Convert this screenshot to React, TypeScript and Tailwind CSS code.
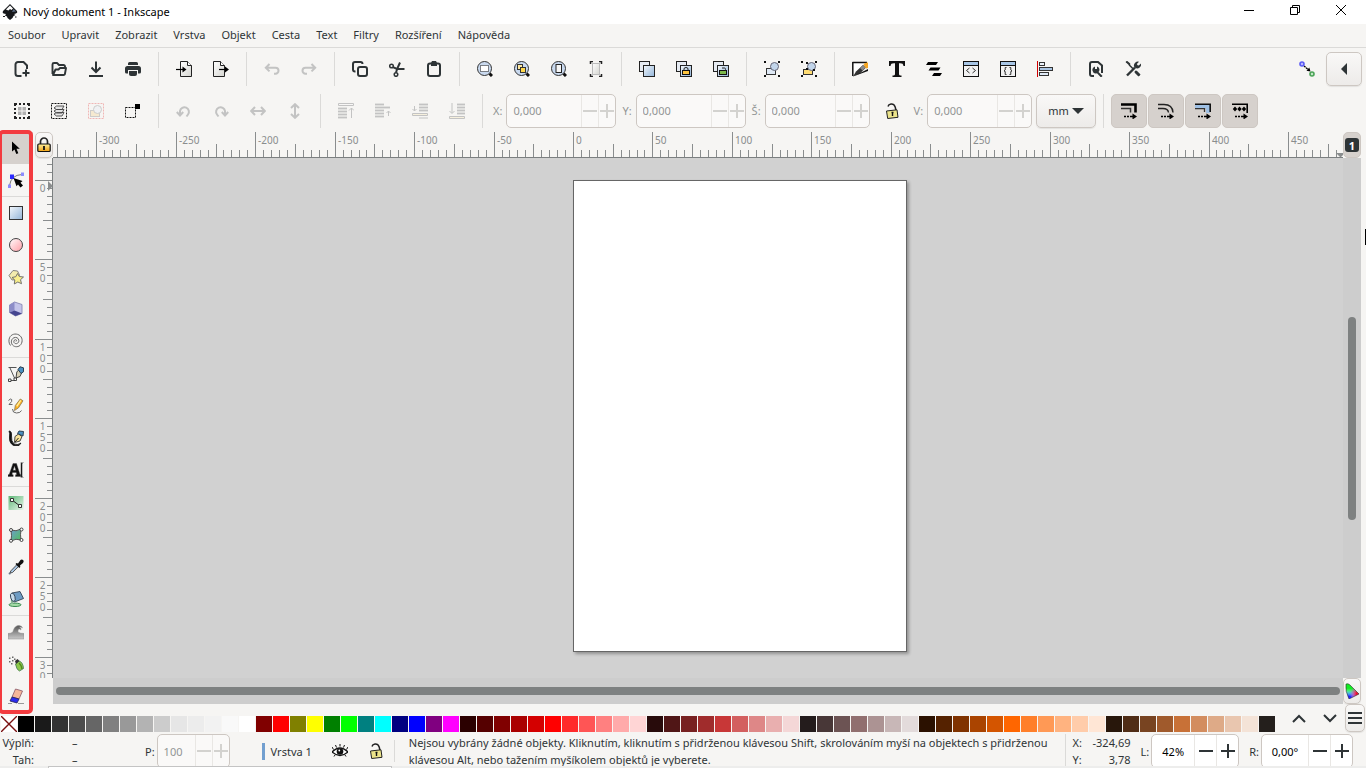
import { useEffect, useId, useRef, useState, type ReactNode } from "react";

const INK = "#2e3436";

function Icon({ children, faded = false }: { children: ReactNode; faded?: boolean }) {
  return (
    <svg
      viewBox="0 0 16 16"
      aria-hidden="true"
      fill="none"
      stroke="none"
      className={faded ? "size-4 shrink-0 opacity-25" : "size-4 shrink-0"}
    >
      {children}
    </svg>
  );
}

function Gradients() {
  return (
    <svg className="absolute size-0" aria-hidden="true">
      <defs>
        <linearGradient id="g-paper" x1="0" y1="0" x2="1" y2="1">
          <stop offset="0" stopColor="#ffffff" />
          <stop offset="1" stopColor="#d5d5d0" />
        </linearGradient>
        <linearGradient id="g-blue" x1="0" y1="0" x2="1" y2="1">
          <stop offset="0" stopColor="#f4f8fc" />
          <stop offset="1" stopColor="#92b4d8" />
        </linearGradient>
        <linearGradient id="g-pink" x1="0" y1="0" x2="1" y2="1">
          <stop offset="0" stopColor="#ffffff" />
          <stop offset="1" stopColor="#ff9ba4" />
        </linearGradient>
        <linearGradient id="g-gold" x1="0" y1="0" x2="0" y2="1">
          <stop offset="0" stopColor="#fff2a0" />
          <stop offset="1" stopColor="#f0a010" />
        </linearGradient>
        <linearGradient id="g-green" x1="0" y1="0" x2="1" y2="1">
          <stop offset="0" stopColor="#5fb878" />
          <stop offset="1" stopColor="#e8f6ea" />
        </linearGradient>
        <linearGradient id="g-teal" x1="0" y1="0" x2="1" y2="1">
          <stop offset="0" stopColor="#6f9bd0" />
          <stop offset="1" stopColor="#4fc05a" />
        </linearGradient>
        <linearGradient id="g-ink" x1="0" y1="0" x2="1" y2="1">
          <stop offset="0" stopColor="#ffffff" />
          <stop offset="0.5" stopColor="#e4e4e4" />
          <stop offset="0.8" stopColor="#111111" />
        </linearGradient>
        <linearGradient id="g-grey" x1="0" y1="0" x2="0" y2="1">
          <stop offset="0" stopColor="#555555" />
          <stop offset="1" stopColor="#c9c9c9" />
        </linearGradient>
      </defs>
    </svg>
  );
}

const arrowUndo = <path d="M5.500 3 1.800 6.700l3.700 3.700M2 6.700h9.500a3 3 0 0 1 0 6H10" stroke={INK} strokeWidth="2" />;

const pageShape = (
  <>
    <path d="M4.500.5h7l4 4v11h-11z" fill="url(#g-paper)" stroke="#222" />
    <path d="M11.500.5v4h4" fill="#fff" stroke="#222" />
  </>
);

const magnifier = (
  <>
    <path d="m12.500 12.500 2.500 2.500" stroke="#111" strokeWidth="3" />
    <circle cx="7.500" cy="7.500" r="7" fill="#c9d9ee" stroke="#333" />
  </>
);

const cloneBase = (
  <>
    <rect x=".5" y=".5" width="10" height="10" fill="#e6ebf2" stroke="#222" />
    <rect x="4.500" y="4.500" width="11" height="11" fill="url(#g-blue)" stroke="#222" />
  </>
);

const cornerDots = (
  <path d="M0 0h2v2H0zM14 0h2v2h-2zM0 14h2v2H0zM14 14h2v2h-2z" fill="#111" />
);

const codeWindow = (
  <>
    <rect x=".5" y=".5" width="15" height="15" fill="#f2f2f2" stroke="#111" />
    <path d="M1 1h14v3H1z" fill="#a8c6e6" />
    <path d="M1 4.500h14" stroke="#111" />
  </>
);

const openLock = (
  <>
    <path d="M12 7.500 11.200 4Q10 .8 7 1.100 4.500 1.500 4 3.500" stroke="#222" strokeWidth="1.500" />
    <path d="m2.500 8 10.500-1.200 1 7.500-10.300 1.200z" fill="#ece48a" stroke="#222" strokeLinejoin="round" />
    <path d="M7.500 9.500h2M8.500 10v3" stroke="#111" strokeWidth="1.400" />
  </>
);

const dashArrow = (
  <>
    <path d="M3 13.500h2m1 0h2m1 0h3" stroke="#000" strokeWidth="1.400" />
    <path d="m11.500 10.500 4.500 3-4.500 3z" fill="#000" />
  </>
);

type Tool = { label: string; art: ReactNode; off?: boolean };

const commandGroups: Tool[][] = [
  [
    { label: "Nový", art: <path d="M7.500 15H4a2.500 2.500 0 0 1-2.500-2.500v-9A2.500 2.500 0 0 1 4 1h5.500L13 4.500V8M12 8.500v7M8.500 12h7" stroke={INK} strokeWidth="2" /> },
    { label: "Otevřít", art: <path d="M1.500 13V3.500a1.500 1.500 0 0 1 1.500-1.500h3L8 4h4.500A1.500 1.500 0 0 1 14 5.500V7M2 14l2.500-5.500h3L9 7h6l-1 5.500A1.500 1.500 0 0 1 12.500 14z" stroke={INK} strokeWidth="1.900" strokeLinejoin="round" /> },
    { label: "Uložit", art: <path d="M8 .5v10M3.500 6.500 8 11l4.500-4.500M1 15h14" stroke={INK} strokeWidth="2" /> },
    { label: "Tisk", art: <><path d="M4.500 1h7a1.500 1.500 0 0 1 1.500 1.500V4H3V2.500A1.500 1.500 0 0 1 4.500 1z" fill={INK} /><path d="M2.500 5h11A2.500 2.500 0 0 1 16 7.500V11a1.500 1.500 0 0 1-1.500 1.500H13V9H3v3.500H1.500A1.500 1.500 0 0 1 0 11V7.500A2.500 2.500 0 0 1 2.500 5z" fill={INK} /><path d="M4 10h8v3a2 2 0 0 1-2 2H6a2 2 0 0 1-2-2z" fill={INK} /></> },
  ],
  [
    { label: "Importovat", art: <>{pageShape}<path d="M0 8.500h7" stroke="#000" strokeWidth="1.200" /><path d="m6.500 5.500 4 3-4 3z" fill="#000" /></> },
    { label: "Exportovat", art: <><g transform="translate(-4 0)">{pageShape}</g><path d="M6 8.500h7" stroke="#000" strokeWidth="1.200" /><path d="m12 5.500 4 3-4 3z" fill="#000" /></> },
  ],
  [
    { label: "Zpět", art: arrowUndo, off: true },
    { label: "Znovu", art: <g transform="matrix(-1 0 0 1 16 0)">{arrowUndo}</g>, off: true },
  ],
  [
    { label: "Kopírovat", art: <><path d="M3.500 10.500H3A2 2 0 0 1 1 8.500V3a2 2 0 0 1 2-2h5.500a2 2 0 0 1 2 2" stroke={INK} strokeWidth="2" /><rect x="6" y="6" width="9" height="9" rx="2" stroke={INK} strokeWidth="2" /></> },
    { label: "Vyjmout", art: <><circle cx="2.500" cy="5" r="1.800" stroke={INK} strokeWidth="1.500" /><circle cx="7" cy="13.500" r="1.800" stroke={INK} strokeWidth="1.500" /><path d="M4 6.200 8 8h7.500M7 11.500 8.500 7 11 1.500" stroke={INK} strokeWidth="2" /></> },
    { label: "Vložit", art: <><rect x="2" y="2.500" width="12" height="12.500" rx="2" stroke={INK} strokeWidth="2" /><path d="M6 0h4l1 2v3H5V2z" fill={INK} /></> },
  ],
  [
    { label: "Přiblížit výběr", art: <>{magnifier}<rect x="3.500" y="4.500" width="8" height="6" fill="#fff" stroke="#111" strokeDasharray="1 1" /></> },
    { label: "Přiblížit kresbu", art: <>{magnifier}<rect x="3.500" y="3.500" width="5" height="5" fill="#ffe9a0" stroke="#333" /><rect x="6.500" y="6.500" width="5" height="5" fill="#ffd84a" stroke="#333" /></> },
    { label: "Přiblížit stránku", art: <>{magnifier}<rect x="5" y="3.500" width="5.500" height="8" fill="#f6f6f6" stroke="#222" /></> },
    { label: "Střed stránky", art: <><rect x="4.500" y="2.500" width="7" height="11" fill="url(#g-paper)" stroke="#bbb" /><path d="M2.500 3V.5H5M11 .5h2.500V3M2.500 13v2.500H5M11 15.500h2.500V13" stroke="#222" strokeWidth="1.500" /></> },
  ],
  [
    { label: "Duplikovat", art: cloneBase },
    { label: "Vytvořit klon", art: <>{cloneBase}<rect x="6.500" y="9.500" width="7" height="4" fill="#ffc640" stroke="#111" /><path d="M8 9.500V8q0-1.500 2-1.500T12 8v1.500" stroke="#222" /></> },
    { label: "Odpojit klon", art: <>{cloneBase}<rect x="6.500" y="9.500" width="7" height="4" fill="#7db84a" stroke="#111" /><path d="M9 7h2.500q1 0 1 1.500v1" stroke="#222" /></> },
  ],
  [
    { label: "Seskupit", art: <>{cornerDots}<rect x="2.500" y="7.500" width="9" height="6" fill="#dfe9f5" stroke="#333" /><circle cx="10.500" cy="5.500" r="4" fill="#c2d5ea" stroke="#667" /></> },
    { label: "Zrušit seskupení", art: <>{cornerDots}<rect x="2.500" y="8.500" width="9" height="5" fill="#ffdc73" stroke="#333" /><circle cx="10.500" cy="5.500" r="4" fill="#c2d5ea" stroke="#667" /><path d="M5 7h2v2H5zM12 8h2v2h-2zM5 1h2v2H5z" fill="#111" /></> },
  ],
  [
    { label: "Výplň a obrys", art: <><path d="M.5 1h14L.8 15.500z" fill="#fff" /><path d="M.5 1.500H15M.8 1v14" stroke="#111" strokeWidth="1.500" /><path d="m1 15.500 3-5L11 4l3 2.500-6 6z" fill="#333" /><path d="m8 7 3-3 2.500 2.500-3 3z" fill="#888" /><path d="M11.500 3.500 13 2l3-.5V7l-2 .5z" fill="#f5a623" /><path d="M1 15.500 16 10v-2l-6 3z" fill="#111" /></> },
    { label: "Text a písmo", art: <path d="M0 0h16v5h-1.500c-.3-2-1-2.700-3.500-2.700H10V13c0 1.200.8 1.500 2.500 1.500V16h-9v-1.500C5.200 14.500 6 14.200 6 13V2.300H5C2.500 2.300 1.800 3 1.500 5H0z" fill="#111" /> },
    { label: "Vrstvy", art: <path d="M2 1h10l-2 3H0zM4.500 6.500h10l-2 3h-10zM8 12h8l-2 3H6z" fill="#000" /> },
    { label: "Editor XML", art: <>{codeWindow}<path d="M6.500 7 3.500 9.500l3 2.500M9.500 7l3 2.500-3 2.500" stroke="#333" /></> },
    { label: "Selektory", art: <>{codeWindow}<path d="M6.500 6.500H5.200v2.500L4 10l1.200.5v3h1.300M9.500 6.500h1.300v2.500l1.200 1-1.200.5v3H9.500" stroke="#333" /></> },
    { label: "Zarovnat a rozmístit", art: <><path d="M.5 0v16" stroke="#d00000" /><rect x="2.500" y="1.500" width="5" height="3" fill="#eaf1f9" stroke="#333" /><rect x="2.500" y="6.500" width="13" height="3" fill="#a9c4e2" stroke="#333" /><rect x="2.500" y="11.500" width="9" height="3" fill="#dfe9f5" stroke="#333" /></> },
  ],
  [
    { label: "Vlastnosti dokumentu", art: <><path d="M6 15H4a2 2 0 0 1-2-2V3a2 2 0 0 1 2-2h6l4 3.500V12" stroke={INK} strokeWidth="2" /><path d="M7 5.500V8h2V5.500a3.300 3.300 0 0 1 1.500 5.500l4 4-1.500 1.500L9 12.300a3.500 3.500 0 0 1-2-6.800z" fill={INK} /></> },
    { label: "Předvolby", art: <><path d="m2 14.500 8-8" stroke={INK} strokeWidth="2.400" /><path d="M14 .8 11.800 3l.8 1.200 1.200.4L16 2.400A4 4 0 0 1 10.500 7L9 5.500A4 4 0 0 1 14 .8z" fill={INK} /><path d="M1 1.500 2 .7 4.500 2.800v1.500l3.500 3.500M10 10l4.500 4.500" stroke={INK} strokeWidth="1.500" fill={INK} /><path d="m10.500 10.500 4 4" stroke={INK} strokeWidth="3" /></> },
  ],
];

const rotateCcw = <path d="M4 13V8a4.500 4.500 0 1 1 8 3.500l-1.500 2M.8 9 4 12.500 7.200 9" stroke={INK} strokeWidth="2" />;
const bars = (w: number[]) => w.map((n, i) => <path key={i} d={`M0 ${1.5 + i * 3}h${n}`} stroke={INK} strokeWidth="1.800" />);

const selectGroups: Tool[][] = [
  [
    { label: "Vybrat vše", art: <><path d="M0 0h3v2H2v1H0zM5 0h2v2H5zM9 0h2v2H9zM13 0h3v3h-2V2h-1zM0 5h2v2H0zM0 9h2v2H0zM14 5h2v2h-2zM14 9h2v2h-2zM0 13h2v1h1v2H0zM5 14h2v2H5zM9 14h2v2H9zM13 14h1v-1h2v3h-3z" fill="#222" /><path d="M4 4h3.500v3.500H4zM8.500 4H12v3.500H8.500zM4 8.500h3.500V12H4zM8.500 8.500H12V12H8.500z" fill="#b0b0b0" /></> },
    { label: "Vybrat vše ve všech vrstvách", art: <><rect x=".5" y=".5" width="15" height="15" stroke="#111" strokeDasharray="2 1" /><path d="m3 11 2.500-1.500H13l-2 3.500H5.500zM3 8l2.500-1.500H13L11 10H5.500zM3 5l2.500-2H13l-2 3.500H5.500z" fill="#e4e4e4" stroke="#444" strokeWidth=".9" /></> },
    { label: "Zrušit výběr", off: true, art: <><rect x=".5" y=".5" width="15" height="15" stroke="#e00000" strokeDasharray="2 1" /><rect x="2.500" y="7.500" width="9" height="6" fill="#f3c66a" stroke="#555" /><circle cx="9.500" cy="6.500" r="4" fill="#dfe9f5" stroke="#555" /></> },
    { label: "Dotykový výběr", art: <><rect x=".5" y="4.500" width="10" height="10" stroke="#111" strokeDasharray="2 1" /><path d="M10 1h5v5h-5z" fill="#000" /></> },
  ],
  [
    { label: "Otočit vlevo", art: rotateCcw, off: true },
    { label: "Otočit vpravo", art: <g transform="matrix(-1 0 0 1 16 0)">{rotateCcw}</g>, off: true },
    { label: "Překlopit vodorovně", art: <path d="M1.500 8h13M5 4 1.200 8 5 12M11 4l3.800 4L11 12" stroke={INK} strokeWidth="2" />, off: true },
    { label: "Překlopit svisle", art: <path d="M8 1.500v13M4 5l4-3.800L12 5M4 11l4 3.800L12 11" stroke={INK} strokeWidth="2" />, off: true },
  ],
  [
    { label: "Do popředí", art: <><path d="M.5.500h15v2H.5z" fill="#fff" stroke={INK} />{[5, 8, 11, 14].map((y) => <path key={y} d={`M0 ${y + 0.5}h9`} stroke={INK} strokeWidth="1.800" />)}<path d="M13.500 15V5M11 7.500 13.500 5 16 7.500" stroke={INK} /></>, off: true },
    { label: "Zvýšit", art: <>{bars([9, 15, 9, 9, 9])}<path d="M13.500 13V8M11.500 10l2-2 2 2" stroke={INK} /></>, off: true },
    { label: "Snížit", art: <><g transform="matrix(-1 0 0 1 16 0)">{bars([9, 9, 9])}</g><path d="M.5 10.500h15v2H.5z" fill="#f6e2a0" stroke={INK} /><path d="M7 15h9M2.500 3v5M.5 6l2 2 2-2" stroke={INK} /></>, off: true },
    { label: "Do pozadí", art: <><g transform="matrix(-1 0 0 1 16 0)">{bars([8, 8, 8, 8])}</g><path d="M.5 13.500h15v2H.5z" fill="#f6e2a0" stroke={INK} /><path d="M3 0v10M.5 8 3 10.500 5.500 8" stroke={INK} /></>, off: true },
  ],
];

const affectTools: Tool[] = [
  { label: "Měnit tloušťku obrysu", art: <><path d="M0 1.500h14.500v8" stroke="#000" strokeWidth="2.600" /><path d="M0 5.500h9.500v4" stroke="#333" strokeWidth="1.500" />{dashArrow}</> },
  { label: "Měnit zaoblené rohy", art: <><path d="M0 1.500h6q8.500 0 9 8M0 5.500h5q5 0 5.500 4" stroke="#222" strokeWidth="1.400" />{dashArrow}</> },
  { label: "Posouvat přechody", art: <><path d="M0 1h15v9h-4V5.500H0z" fill="#9fc0e4" /><path d="M0 1.200h15.200V9" stroke="#111" strokeWidth="1.600" /><path d="M0 5.700h9.500V9" stroke="#333" strokeWidth="1.300" />{dashArrow}</> },
  { label: "Posouvat vzorky", art: <><path d="M0 1.200h15.200V10" stroke="#000" strokeWidth="1.600" /><path d="m3 3.500 2.200 2.500L3 8.500.8 6zM7.500 3.500 9.700 6 7.500 8.500 5.300 6zM12 3.500 14.200 6 12 8.500 9.800 6z" fill="#000" />{dashArrow}</> },
];

const toolboxGroups: Tool[][] = [
  [
    { label: "Výběr", art: <path d="M4 1.500v10l2.500-2 1.800 4.500 2-.8L8.500 8.800h3.300z" fill="#000" /> },
    { label: "Uzly", art: <><path d="M1.500 13.500Q3 3 14 2.500" stroke="#777" /><path d="M0 12.500h3V16H0zM13 .5h3V4h-3z" fill="#8c8cff" /><path d="M2 2.500h4V7H2z" fill="#2b2bff" /><path d="m5.500 6 9 3-2 1.700 2.500 2.800-2.500 2-2.500-3-1.500 1.800z" fill="#000" /></> },
  ],
  [
    { label: "Obdélník", art: <rect x="1.500" y="1.500" width="13" height="13" fill="url(#g-blue)" stroke="#333" /> },
    { label: "Elipsa", art: <circle cx="8" cy="8" r="6.500" fill="url(#g-pink)" stroke="#444" /> },
    { label: "Hvězda", art: <><path d="m5 1.500 4.500.5 2 4-2.500 4.500-5 .5-3-4.500z" fill="#f3ecae" stroke="#777" strokeWidth=".9" /><path d="m9.500 4.500 1.800 3 4.200.5-3 2.700 1 4-3.700-1.700-3.500 2 .5-4-2.800-2.500 3.800-.8z" fill="#f9ef8c" stroke="#666" strokeWidth=".9" /></> },
    { label: "Kvádr", art: <><path d="M6.500 1 14 3.500v9L7.500 15 1.500 11.500V4z" fill="#c4c4ea" stroke="#8888b4" strokeWidth=".9" /><path d="M6.500 1v8.500l-5 2V4z" fill="#8c8cc8" /><path d="m1.500 11.500 5-2 7.500 3L7.500 15z" fill="#45458f" /></> },
    { label: "Spirála", art: <path d="M8 8.500c1-1 .5-2-.7-1.800C5.500 7 5.300 9.500 6.800 10.300c2.200 1.200 4.300-.8 4-3C10.500 4.800 8 3.800 5.800 4.800 3 6.200 2.700 9.800 4.500 12c2.300 2.500 6.300 2.200 8.300-.4C15 8.500 14.500 4 11 2 7.500 0 3 1.200 1.500 4.800c-1 2.500-.7 5.700 1 7.700" stroke="#666" /> },
  ],
  [
    { label: "Pero", art: <><path d="M.5 1.500h8M2 2l4.500 10M2 14.500h5" stroke="#555" /><path d="M.5 13h2.500v2.500H.5zM6 12h2.500v2.500H6z" fill="#fff" stroke="#333" strokeWidth=".9" /><path d="m8 12 .8-6L11 3.500l3 2.500-2 4.500z" fill="#d9d2b8" stroke="#333" strokeWidth=".9" /><path d="m10 3.500 2-2.700 3.500 1v4L13 7.500z" fill="#4a90c0" stroke="#234" strokeWidth=".9" /></> },
    { label: "Tužka", art: <><path d="M.5 2.500q2-2.500 3.200-1T1 6.500h3.500M4.500 11q0 4 4 4t5-2.500" stroke="#666" /><path d="m6.500 12.500.8-5 5-6.500 2.700 1.800-4.500 7z" fill="#ffb21e" stroke="#875" strokeWidth=".8" /><path d="m8.200 8 4-6L13.300 2.700l-4 6z" fill="#fff0a0" /></> },
    { label: "Kaligrafie", art: <><path d="M1 1q3 0 2.500 5T6 14q4 1.500 7-1l-2 2.500H5.500Q1 13 1.500 7 2 3 1 1z" fill="#111" stroke="#111" strokeWidth=".8" /><path d="M6.500 12.500 7 6.500l3.500-2.500 3.500 2.500L12 11z" fill="#f9e49a" stroke="#333" strokeWidth=".9" /><path d="m9.500 3.500 1.500-2.500 4.500.5-.5 4.500z" fill="#4a90c0" stroke="#234" strokeWidth=".9" /><path d="m7 12 3.500-4" stroke="#222" /></> },
    { label: "Text", art: <path d="M0 14.500v-1.700l1.200-.3L5 1.500h3.500l3.500 11 1 .3v1.700H7.500v-1.700l1.200-.3-.5-2H4.500l-.6 2 1.300.3v1.700zM5 8.300h2.800L6.500 4zM12.800.5q1.300 0 1.300 1.300v12.500q0 1.200-1.300 1.200M15.500.5Q14.100.5 14.100 1.800M14.100 14.300q0 1.200 1.400 1.200" fill="#111" stroke="#444" strokeWidth=".4" fillRule="evenodd" /> },
  ],
  [
    { label: "Přechod", art: <><rect x=".5" y="1" width="15" height="14" fill="url(#g-green)" /><path d="m4 5 8 6" stroke="#222" /><path d="M2.500 3.500h3v3h-3zM10.500 9.500h3v3h-3z" fill="#fff" stroke="#333" /></> },
    { label: "Síť", art: <><path d="M3 3q5 2 10-1-1 6 0 11-5-2-10 1 1-5 0-11z" fill="url(#g-teal)" stroke="#555" /><g fill="#fff" stroke="#333" strokeWidth=".9"><circle cx="3" cy="3" r="1.500" /><circle cx="13.500" cy="2.500" r="1.500" /><circle cx="13.500" cy="13" r="1.500" /><circle cx="3" cy="13.800" r="1.500" /></g></> },
    { label: "Kapátko", art: <><path d="m2 14 .7-2L9 5.500l1.800 1.800L4.500 13.500z" fill="#a8c4e0" stroke="#444" strokeWidth=".9" /><path d="m7.500 5 1-1 1.500.5L12.500 1Q14 0 15.500 1.500q.5 1-.5 2.500l-3 2.500.3 1.500-1 1z" fill="#111" /><circle cx="1.700" cy="14.500" r="1.100" fill="#678" /></> },
    { label: "Vyplnění", art: <><ellipse cx="7" cy="13.800" rx="6" ry="1.700" fill="#a5dca6" stroke="#3a8a50" /><path d="M4 5v8" stroke="#8ab896" strokeWidth="2.200" /><path d="m4 2 8-1.500L15.500 7.500 6.500 11z" fill="#6d9cc4" stroke="#345" strokeWidth=".9" /><ellipse cx="4.800" cy="6.200" rx="2.200" ry="4.300" fill="#c7dbea" stroke="#345" strokeWidth=".9" transform="rotate(-15 5 6)" /></> },
  ],
  [
    { label: "Vylepšit", art: <path d="M0 15V9.500q5 0 5.500-3.500Q7 1.500 11 1.500q3 .3 3.500 2.500-1.500-1.500-3-.8 2 .8 1.500 2.800-1.500-1.800-3 0-1 3.500 6 3.500V15z" fill="url(#g-grey)" stroke="#888" strokeWidth=".5" /> },
    { label: "Sprej", art: <><path d="M1 1.500h1.500V3H1zM4 .5h1.500V2H4zM1 5h1.500v1.500H1zM4 4h1.500v1.500H4zM6 2.500h1.500V4H6zM3 7h1.500v1.500H3z" fill="#666" /><path d="m7.500 8 3.500-3q4 1 4.500 7.500L11.500 15q-3-1-4-7z" fill="#8cc84a" stroke="#475" strokeWidth=".8" /><path d="m7 5 2.500-2 2 2L8 8z" fill="#333" /><path d="M11 7q2.500 2 3 6" stroke="#4f8a1c" strokeWidth="1.500" /></> },
    { label: "Guma", art: <><path d="M0 15.500h4M10 15.500h6" stroke="#999" /><path d="m7.500 1 7 2-3.500 8-7-2z" fill="#f5b79a" stroke="#856" strokeWidth=".8" /><path d="m4 9 7 2-2 4-7-2z" fill="#2b2bf0" stroke="#225" strokeWidth=".8" /></> },
  ],
];

function Divider() {
  return <span aria-hidden="true" className="mx-[7px] h-[34px] w-px bg-[#dbdad8]" />;
}

function ToolButton({ tool }: { tool: Tool }) {
  return (
    <button type="button" aria-label={tool.label} disabled={tool.off} className="flex h-[34px] w-9 items-center justify-center rounded-md">
      <Icon faded={tool.off}>{tool.art}</Icon>
    </button>
  );
}

function Group({ tools }: { tools: Tool[] }) {
  return (
    <div className="flex gap-px">
      {tools.map((t) => (
        <ToolButton key={t.label} tool={t} />
      ))}
    </div>
  );
}

type SpinProps = { label: string; name: string; value: string; field: string; step: string; off?: boolean; status?: boolean };

function Spin({ label, name, value, field, step, off = false, status = false }: SpinProps) {
  const id = useId();
  const tone = off ? "text-[#929595]" : "text-[#2e3436]";
  const mark = off ? "#d3d2cf" : INK;
  return (
    <div className={`flex items-center ${tone}`}>
      <label htmlFor={id} className={status ? "mr-0.5 whitespace-nowrap text-[#2e3436]" : "mr-1 whitespace-nowrap"}>{label}</label>
      <div className={`flex h-[34px] overflow-hidden rounded-[5px] border border-[#cdc7c2] ${off ? "bg-[#faf9f8]" : "bg-white"}`}>
        <input id={id} aria-label={name} defaultValue={value} disabled={off} className={`${field} bg-transparent outline-none ${status && !off ? "text-center text-black" : "pl-1.5"}`} />
        <button type="button" aria-label={`${name} −`} disabled={off} className={`flex ${step} items-center justify-center border-l border-[#e9e7e4]`}>
          <svg viewBox="0 0 14 14" className="size-3.5 shrink-0"><path d="M0 7h14" stroke={mark} strokeWidth="2" /></svg>
        </button>
        <button type="button" aria-label={`${name} +`} disabled={off} className={`flex ${step} items-center justify-center border-l border-[#e9e7e4]`}>
          <svg viewBox="0 0 14 14" className="size-3.5 shrink-0"><path d="M0 7h14M7 0v14" stroke={mark} strokeWidth="2" /></svg>
        </button>
      </div>
    </div>
  );
}

const UNIT = 1.5888;

// Tick values, five units apart, that fall inside a ruler of the given length.
function ticksFor(origin: number, length: number) {
  const first = Math.ceil(-origin / UNIT / 5);
  const last = Math.floor((length - origin - 1) / UNIT / 5);
  return Array.from({ length: Math.max(0, last - first + 1) }, (_, i) => (first + i) * 5);
}

function useLength(axis: "width" | "height") {
  const ref = useRef<SVGSVGElement>(null);
  const [length, setLength] = useState(0);
  useEffect(() => {
    const el = ref.current;
    if (!el) return;
    const measure = () => setLength(el.getBoundingClientRect()[axis]);
    measure();
    const observer = new ResizeObserver(measure);
    observer.observe(el);
    return () => observer.disconnect();
  }, [axis]);
  return [ref, length] as const;
}

function HorizontalRuler() {
  const [ref, length] = useLength("width");
  return (
    <svg ref={ref} className="h-[26px] min-w-0 flex-1 overflow-hidden" aria-hidden="true" fill="#8a8d8e" fontSize="10">
      {ticksFor(520, length).map((u) => {
        const x = Math.round(520 + u * UNIT);
        const top = u % 50 === 0 ? 0 : u % 25 === 0 ? 12 : 18;
        return (
          <g key={u}>
            <rect x={x} y={top} width="1" height={26 - top} />
            {u % 50 === 0 && <text x={x + 3} y="12">{u}</text>}
          </g>
        );
      })}
      <rect x="0" y="25" width="100%" height="1" fill="#7b7f80" />
      <path d="M1283 21h9l-4.500 4.500z" />
    </svg>
  );
}

function VerticalRuler() {
  const [ref, length] = useLength("height");
  return (
    <svg ref={ref} className="h-full w-[18px] shrink-0 overflow-hidden" aria-hidden="true" fill="#8a8d8e" fontSize="10">
      {ticksFor(22, length).map((u) => {
        const y = Math.round(22 + u * UNIT);
        const left = u % 50 === 0 ? 0 : u % 25 === 0 ? 8 : 12;
        return (
          <g key={u}>
            <rect x={left} y={y} width={18 - left} height="1" />
            {u % 50 === 0 &&
              String(u).split("").map((d, i) =>
                y + 4 + i * 11 < length ? (
                  <text key={i} x="7.500" y={y + 12 + i * 11} textAnchor="middle">{d}</text>
                ) : null,
              )}
          </g>
        );
      })}
      <rect x="17" y="0" width="1" height="100%" fill="#7b7f80" />
      <path d="M13 23v10l5-5z" />
    </svg>
  );
}

const swatches = [
  "bg-[#000000]", "bg-[#1a1a1a]", "bg-[#333333]", "bg-[#4d4d4d]", "bg-[#666666]", "bg-[#808080]", "bg-[#999999]", "bg-[#b3b3b3]", "bg-[#cccccc]", "bg-[#e6e6e6]", "bg-[#ececec]", "bg-[#f2f2f2]", "bg-[#f9f9f9]", "bg-[#ffffff]",
  "bg-[#800000]", "bg-[#ff0000]", "bg-[#808000]", "bg-[#ffff00]", "bg-[#008000]", "bg-[#00ff00]", "bg-[#008080]", "bg-[#00ffff]", "bg-[#000080]", "bg-[#0000ff]", "bg-[#800080]", "bg-[#ff00ff]",
  "bg-[#2b0000]", "bg-[#550000]", "bg-[#800000]", "bg-[#aa0000]", "bg-[#d40000]", "bg-[#ff0000]", "bg-[#ff2a2a]", "bg-[#ff5555]", "bg-[#ff8080]", "bg-[#ffaaaa]", "bg-[#ffd5d5]",
  "bg-[#280b0b]", "bg-[#501616]", "bg-[#782121]", "bg-[#a02c2c]", "bg-[#c83737]", "bg-[#d35f5f]", "bg-[#de8787]", "bg-[#e9afaf]", "bg-[#f4d7d7]",
  "bg-[#241c1c]", "bg-[#483737]", "bg-[#6c5353]", "bg-[#916f6f]", "bg-[#ac9393]", "bg-[#c8b7b7]", "bg-[#e3dbdb]",
  "bg-[#2b1100]", "bg-[#552200]", "bg-[#803300]", "bg-[#aa4400]", "bg-[#d45500]", "bg-[#ff6600]", "bg-[#ff7f2a]", "bg-[#ff9955]", "bg-[#ffb380]", "bg-[#ffccaa]", "bg-[#ffe6d5]",
  "bg-[#28170b]", "bg-[#502d16]", "bg-[#784421]", "bg-[#a05a2c]", "bg-[#c87137]", "bg-[#d38d5f]", "bg-[#deaa87]", "bg-[#e9c6af]", "bg-[#f4e3d7]",
  "bg-[#241f1c]",
];

const menus = ["Soubor", "Upravit", "Zobrazit", "Vrstva", "Objekt", "Cesta", "Text", "Filtry", "Rozšíření", "Nápověda"];

const raised = "border border-[#cdc7c2] bg-linear-to-b from-[#f9f8f7] to-[#edebe9] shadow-[0_1px_1px_rgba(0,0,0,0.08)]";

function TitleBar() {
  return (
    <header className="flex h-6 shrink-0 items-center bg-white pr-0.5 text-black">
      <svg viewBox="0 0 16 16" className="ml-0.5 size-4" aria-hidden="true">
        <path d="M8 0 15 7q1 1.500-1 2.500l-2 .5 1.500 1-2 1-1 2L8 16l-2.500-2-.5-1.500-2-1 1-1.500-2.500-.5Q0 8.500 1 7z" fill="#15171a" />
        <path d="m8 1.500 3 3-1.500 1.500L8 5 6.500 6.500 5 6l-1-.5z" fill="#fff" />
        <path d="M11.500 5 14 7.500l-4 .5z" fill="#56657c" />
        <path d="M1 12.500h2M13 13h1.500" stroke="#222" strokeWidth="1" />
      </svg>
      <h1 className="ml-[5px] flex-1">Nový dokument 1 - Inkscape</h1>
      <button type="button" aria-label="Minimalizovat" className="flex h-6 w-[46px] items-center justify-center pb-1">
        <svg viewBox="0 0 10 10" className="size-2.5"><path d="M0 5.500h10" stroke="#000" /></svg>
      </button>
      <button type="button" aria-label="Obnovit" className="flex h-6 w-[46px] items-center justify-center pb-1">
        <svg viewBox="0 0 10 10" className="size-2.5" fill="none" stroke="#000"><path d="M.5 2.500h7v7h-7zM2.500 2V.5h7v7H8" /></svg>
      </button>
      <button type="button" aria-label="Zavřít" className="flex h-6 w-[46px] items-center justify-center pb-1">
        <svg viewBox="0 0 10 10" className="size-2.5"><path d="m0 0 10 10M10 0 0 10" stroke="#000" /></svg>
      </button>
    </header>
  );
}

function CommandBar() {
  return (
    <div role="toolbar" aria-label="Příkazy" className="flex h-[42px] shrink-0 items-center pr-1 pl-1">
      {commandGroups.map((g, i) => (
        <div key={i} className="flex">
          {i > 0 && <Divider />}
          <Group tools={g} />
        </div>
      ))}
      <div className="ml-auto flex items-center gap-px">
        <ToolButton tool={{ label: "Přichytávání", art: <><path d="m5 5 5.500 4.500" stroke="#000" strokeWidth="1.300" strokeDasharray="2 .6" /><path d="m11.500 10.500-4-.8L10.300 6.500z" fill="#000" /><circle cx="3" cy="3" r="2" fill="#b9b9ff" stroke="#5a5af5" strokeWidth="1.600" /><circle cx="13" cy="13" r="2" fill="#c4e6c8" stroke="#4ba457" strokeWidth="1.600" /></> }} />
        <button type="button" aria-label="Nabídka přichytávání" className={`flex h-[34px] w-9 items-center justify-center rounded-[5px] ${raised}`}>
          <svg viewBox="0 0 6 12" className="h-3 w-1.5"><path d="M6 0v12L0 6z" fill={INK} /></svg>
        </button>
      </div>
    </div>
  );
}

function ControlBar() {
  return (
    <div role="toolbar" aria-label="Ovládání výběru" className="flex h-[42px] shrink-0 items-center pl-1">
      {selectGroups.map((g, i) => (
        <div key={i} className="flex">
          <Group tools={g} />
          <Divider />
        </div>
      ))}
      <div className="flex items-center gap-1.5 pl-[3px]">
        <Spin label="X:" name="X" value="0,000" field="w-[74px]" step="w-[17px]" off />
        <Spin label="Y:" name="Y" value="0,000" field="w-[74px]" step="w-[17px]" off />
        <Spin label="Š:" name="Šířka" value="0,000" field="w-[69px]" step="w-[17px]" off />
      </div>
      <button type="button" aria-label="Zamknout poměr stran" className="mx-1 flex h-[34px] w-9 items-center justify-center">
        <Icon>{openLock}</Icon>
      </button>
      <Spin label="V:" name="Výška" value="0,000" field="w-[69px]" step="w-[17px]" off />
      <div className="relative ml-1 flex">
        <select aria-label="Jednotky" className={`h-[34px] w-[60px] appearance-none rounded-[5px] pl-[11px] ${raised}`}>
          <option>mm</option>
        </select>
        <svg viewBox="0 0 12 6" className="pointer-events-none absolute top-3.5 right-3 h-1.5 w-3"><path d="M0 0h12L6 6z" fill={INK} /></svg>
      </div>
      <Divider />
      <div className="flex gap-px">
        {affectTools.map((t) => (
          <button key={t.label} type="button" aria-label={t.label} aria-pressed="true" className="flex h-[34px] w-9 items-center justify-center rounded-[5px] border border-[#cdc7c2] bg-[#d6d1cd]">
            <Icon>{t.art}</Icon>
          </button>
        ))}
      </div>
    </div>
  );
}

function Toolbox() {
  return (
    <nav aria-label="Nástroje" className="relative flex w-[33px] shrink-0 flex-col">
      {toolboxGroups.map((g, i) => (
        <div key={i} className={i > 0 ? "flex flex-col border-t border-[#dbdad8]" : "flex flex-col"}>
          {g.map((t) => (
            <button key={t.label} type="button" aria-label={t.label} className={`flex h-8 items-center justify-center pr-px ${t.label === "Výběr" ? "bg-[#d6d1cd]" : ""}`}>
              <Icon>{t.art}</Icon>
            </button>
          ))}
        </div>
      ))}
      <span aria-hidden="true" className="pointer-events-none absolute -inset-y-0.5 right-0 -left-0.5 rounded-[5px] border-4 border-[#f33b3f]" />
    </nav>
  );
}

function Workspace() {
  return (
    <main className="mr-[5px] mb-2 ml-0.5 flex min-w-0 flex-1 flex-col">
      <div className="flex h-[26px] shrink-0">
        <button type="button" aria-label="Zamknout vodítka" className={`flex h-[26px] w-[18px] shrink-0 items-center justify-center rounded-[5px] ${raised}`}>
          <svg viewBox="0 0 14 16" className="h-4 w-3.5 shrink-0">
            <path d="M3.500 8V4.500a3.500 3.500 0 0 1 7 0V8" fill="none" stroke="#222" strokeWidth="1.700" />
            <rect x=".8" y="7" width="12.400" height="7.500" rx="1" fill="url(#g-gold)" stroke="#111" strokeWidth="1.200" />
            <path d="M7 9v4" stroke="#111" strokeWidth="1.800" />
          </svg>
        </button>
        <HorizontalRuler />
        <button type="button" aria-label="Strana" className="flex h-[26px] w-[18px] shrink-0 items-center justify-center rounded-[5px] border border-[#cdc7c2] bg-[#d6d1cd]">
          <span className="flex size-3.5 shrink-0 items-center justify-center rounded-[3px] bg-[#2e3436] leading-none font-bold text-white">1</span>
        </button>
      </div>
      <div className="flex min-h-0 flex-1">
        <VerticalRuler />
        <div id="canvas" className="relative min-w-0 flex-1 overflow-hidden bg-[#d1d1d1]">
          <div className="absolute top-[22px] left-[520px] h-[472px] w-[334px] border border-[#666] bg-white shadow-[2px_2px_3px_rgba(0,0,0,0.3)]" />
        </div>
        <div role="scrollbar" aria-controls="canvas" aria-orientation="vertical" aria-valuenow={50} className="flex w-[18px] shrink-0 flex-col items-center bg-[#cdcdcd]">
          <span className="flex-[159]" />
          <span className="w-2 flex-[203] rounded-full bg-[#7e8181]" />
          <span className="flex-[158]" />
        </div>
      </div>
      <div className="flex h-[26px] shrink-0 pl-[18px]">
        <div role="scrollbar" aria-controls="canvas" aria-orientation="horizontal" aria-valuenow={50} className="flex flex-1 items-center bg-[#cdcdcd] px-[3px]">
          <span className="h-2 flex-1 rounded-full bg-[#7e8181]" />
        </div>
        <button type="button" aria-label="Správa barev" className={`flex h-[26px] w-[18px] shrink-0 items-center justify-center rounded-[5px] ${raised}`}>
          <svg viewBox="0 0 14 16" className="h-4 w-3.5 shrink-0">
            <defs>
              <radialGradient id="g-r" gradientUnits="userSpaceOnUse" cx="14" cy="11" r="9"><stop offset=".3" stopColor="#f01030" /><stop offset="1" stopColor="#f0f" stopOpacity="0" /></radialGradient>
              <radialGradient id="g-b" gradientUnits="userSpaceOnUse" cx="4" cy="16" r="9"><stop offset=".3" stopColor="#22f" /><stop offset="1" stopColor="#0cf" stopOpacity="0" /></radialGradient>
              <linearGradient id="g-g" x1="0" y1="0" x2="0" y2="1"><stop offset=".3" stopColor="#1e2" /><stop offset=".8" stopColor="#cff" /></linearGradient>
            </defs>
            {["url(#g-g)", "url(#g-b)", "url(#g-r)"].map((f) => (
              <path key={f} d="M1 1q2-1 4 1l9 9-10 5Q0 8 1 1z" fill={f} />
            ))}
            <path d="M1 1q2-1 4 1l9 9-10 5Q0 8 1 1z" fill="none" stroke="#333" strokeWidth=".6" />
          </svg>
        </button>
      </div>
    </main>
  );
}

function Palette() {
  return (
    <div className="-mt-2 flex h-[30px] shrink-0 items-end pb-0.5 pl-px">
      <div className="flex gap-px">
        <button type="button" aria-label="Žádná barva" className="size-4 bg-white">
          <svg viewBox="0 0 16 16" className="size-4"><path d="m0 0 16 16M16 0 0 16" stroke="#7a1010" strokeWidth="1.400" /></svg>
        </button>
        {swatches.map((c, i) => (
          <button key={i} type="button" aria-label={`Barva ${i + 1}`} className={`size-4 ${c}`} />
        ))}
      </div>
      <div className="mr-px ml-auto flex items-center">
        <button type="button" aria-label="Nahoru" className="flex h-7 w-[31px] items-center justify-center">
          <svg viewBox="0 0 14 9" className="h-[9px] w-3.5" fill="none"><path d="m1 8 6-6 6 6" stroke={INK} strokeWidth="2" /></svg>
        </button>
        <button type="button" aria-label="Dolů" className="flex h-7 w-[31px] items-center justify-center">
          <svg viewBox="0 0 14 9" className="h-[9px] w-3.5" fill="none"><path d="m1 1 6 6 6-6" stroke={INK} strokeWidth="2" /></svg>
        </button>
        <button type="button" aria-label="Nabídka palety" className={`flex h-7 w-5 items-center justify-center rounded-[5px] ${raised}`}>
          <svg viewBox="0 0 14 12" className="h-3 w-3.5 shrink-0"><path d="M0 1h14M0 6h14M0 11h14" stroke={INK} strokeWidth="2" /></svg>
        </button>
      </div>
    </div>
  );
}

function StatusBar() {
  return (
    <footer className="relative flex h-[34px] shrink-0 overflow-hidden leading-[17px]">
      <dl className="grid w-[145px] shrink-0 grid-cols-[34px_1fr]">
        <dt className="text-right">Výplň:</dt>
        <dd className="pl-[38px]">–</dd>
        <dt className="text-right">Tah:</dt>
        <dd className="pl-[38px]">–</dd>
      </dl>
      <Spin label="P:" name="Krytí" value="100" field="w-[37px]" step="w-[17px]" off status />
      <div className="ml-8 flex items-center">
        <span className="h-[17px] w-[3px] bg-[#729fcf]" />
        <button type="button" className="ml-1.5">Vrstva 1</button>
      </div>
      <button type="button" aria-label="Viditelnost vrstvy" className="ml-2.5 flex w-9 items-center justify-center">
        <Icon>
          <path d="M0 9q8-8 16 0-8 7-16 0z" fill="#fff" stroke="#111" strokeWidth="1.300" />
          <circle cx="8" cy="8.500" r="3.300" fill="#111" />
          <path d="M1.500 6.500 0 4M4.500 4.500 3.500 2M8 3.500V1M11.500 4.500l1-2.500M14.500 6.500 16 4M3 12l-1 1.500M13 12l1 1.500" stroke="#111" />
          <circle cx="7.300" cy="7.500" r=".9" fill="#fff" />
        </Icon>
      </button>
      <button type="button" aria-label="Zámek vrstvy" className="flex w-9 items-center justify-center">
        <Icon>{openLock}</Icon>
      </button>
      <span className="mt-1.5 h-[22px] w-px bg-[#dbdad8]" />
      <p className="ml-3.5 w-[656px] overflow-hidden">
        Nejsou vybrány žádné objekty. Kliknutím, kliknutím s přidrženou klávesou Shift, skrolováním myší na objektech s přidrženou klávesou Alt, nebo tažením myšíkolem objektů je vyberete.
      </p>
      <span className="h-[34px] w-px bg-[#dbdad8]" />
      <div className="ml-auto flex pr-[13px]">
        <dl className="mr-2.5 grid w-[58px] grid-cols-[16px_1fr]">
          <dt>X:</dt>
          <dd className="text-right">-324,69</dd>
          <dt>Y:</dt>
          <dd className="text-right">3,78</dd>
        </dl>
        <Spin label="L:" name="Lupa" value="42%" field="w-[42px]" step="w-[22px]" status />
        <div className="ml-2.5 flex">
          <Spin label="R:" name="Rotace" value="0,00°" field="w-[46px]" step="w-[22px]" status />
        </div>
      </div>
      <div aria-hidden="true" className="absolute inset-x-0 bottom-0 flex h-0.5 bg-[#ededec]">
        <span className="ml-12 w-[344px] border border-b-0 border-[#c4c4c4] bg-white" />
      </div>
    </footer>
  );
}

export default function App() {
  return (
    <div className="relative flex h-screen flex-col overflow-hidden bg-[#f6f5f3] font-['Noto_Sans',sans-serif] text-[11px] text-[#2e3436]">
      <Gradients />
      <TitleBar />
      <nav aria-label="Hlavní nabídka" className="flex h-6 shrink-0 items-center border-b border-[#dbdad8]">
        {menus.map((m) => (
          <button key={m} type="button" className="px-2">{m}</button>
        ))}
      </nav>
      <CommandBar />
      <ControlBar />
      <div className="flex min-h-0 flex-1">
        <Toolbox />
        <Workspace />
      </div>
      <Palette />
      <StatusBar />
      <span aria-hidden="true" className="absolute top-[229px] right-0 h-4 w-px bg-black" />
    </div>
  );
}
